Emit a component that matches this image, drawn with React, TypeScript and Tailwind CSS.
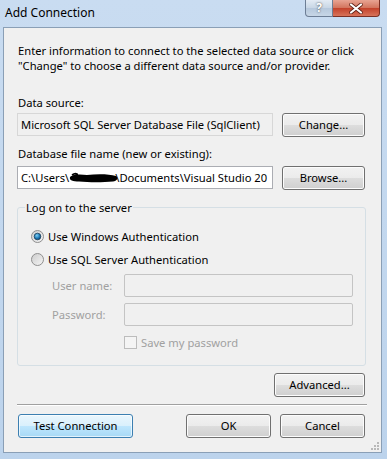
import React from "react";

const font = { fontFamily: '"Noto Sans", "Open Sans", sans-serif' };

function WinButton({ label, width, focused = false }: { label: string; width: string; focused?: boolean }) {
  return (
    <button
      className={`${width} h-[24px] rounded-[3px] border text-[11.2px] text-black leading-none ${
        focused
          ? "border-[#3c7fb1] bg-[linear-gradient(to_bottom,#eaf6fd_0%,#d9f0fc_50%,#bee6fd_51%,#a7d9f5_100%)] shadow-[inset_0_0_0_1px_#ffffffaa]"
          : "border-[#707070] bg-[linear-gradient(to_bottom,#f2f2f2_0%,#ebebeb_50%,#dddddd_51%,#cfcfcf_100%)] shadow-[inset_0_0_0_1px_#fcfcfc]"
      }`}
    >
      {label}
    </button>
  );
}

function Radio({ checked }: { checked: boolean }) {
  return (
    <svg width="13" height="13" viewBox="0 0 13 13" className="shrink-0">
      <defs>
        <linearGradient id={checked ? "rg1" : "rg0"} x1="0" y1="0" x2="1" y2="1">
          <stop offset="0" stopColor="#cbcbcb" />
          <stop offset="1" stopColor="#f6f6f6" />
        </linearGradient>
        <radialGradient id="dot" cx="0.4" cy="0.35" r="0.7">
          <stop offset="0" stopColor="#7fd0f4" />
          <stop offset="0.6" stopColor="#1c78b5" />
          <stop offset="1" stopColor="#0d3f66" />
        </radialGradient>
      </defs>
      <circle cx="6.5" cy="6.5" r="6" fill={`url(#${checked ? "rg1" : "rg0"})`} stroke="#8f8f8f" strokeWidth="1" />
      {checked && <circle cx="6.5" cy="6.5" r="3.3" fill="url(#dot)" stroke="#1b3f5c" strokeWidth="0.8" />}
    </svg>
  );
}

export default function App() {
  return (
    <div style={font} className="w-[387px] h-[459px] flex flex-col bg-[linear-gradient(to_bottom,#c9dcf1,#bcd3ec)] overflow-hidden">
      {/* title bar */}
      <div className="h-[27px] flex items-start shrink-0">
        <div className="pl-[5px] pt-[5px] text-[12px] leading-[16px] text-black">Add Connection</div>
        <div className="ml-auto mr-[7px] flex">
          <div className="w-[28px] h-[17px] rounded-bl-[4px] border border-t-0 border-[#6d7e95] bg-[linear-gradient(to_bottom,#e3ebf4,#c8d6e5_50%,#b6c8dc_51%,#c7d6e6)] flex items-center justify-center text-[12px] font-bold text-white [text-shadow:0_0_2px_#333]">
            ?
          </div>
          <div className="w-[47px] h-[17px] rounded-br-[4px] border border-l-0 border-t-0 border-[#7a2f24] bg-[linear-gradient(to_bottom,#e8a493,#d2735c_50%,#c3412a_51%,#d7735a)] flex items-center justify-center">
            <svg width="14" height="11" viewBox="0 0 14 11">
              <path d="M2 1.5 L12 9.5 M12 1.5 L2 9.5" stroke="#5b1e14" strokeWidth="3.6" strokeLinecap="round" />
              <path d="M2 1.5 L12 9.5 M12 1.5 L2 9.5" stroke="#ffffff" strokeWidth="2.2" strokeLinecap="round" />
            </svg>
          </div>
        </div>
      </div>

      {/* client area */}
      <div className="ml-[3px] w-[379px] h-[426px] border border-[#8a9fb6] bg-[#f0f0f0] text-[11.2px] leading-[15px] text-black flex flex-col px-[13px]">
        <p className="mt-[15px] pl-[1px] whitespace-nowrap">
          Enter information to connect to the selected data source or click
          <br />
          "Change" to choose a different data source and/or provider.
        </p>

        <div className="mt-[22px] pl-[1px]">Data source:</div>
        <div className="mt-[3px] flex items-start">
          <div className="w-[256px] h-[23px] border border-[#d7d7d7] bg-[#f0f0f0] px-[3px] flex items-center whitespace-nowrap overflow-hidden">
            Microsoft SQL Server Database File (SqlClient)
          </div>
          <div className="ml-[9px]">
            <WinButton label="Change..." width="w-[83px]" />
          </div>
        </div>

        <div className="mt-[9px] pl-[1px]">Database file name (new or existing):</div>
        <div className="mt-[5px] flex items-start">
          <div className="w-[256px] h-[23px] border border-[#abadb3] bg-white px-[3px] flex items-center overflow-hidden whitespace-nowrap">
            C:\Users\
            <svg width="52" height="13" viewBox="0 0 52 13" className="-ml-[2px] -mr-[4px] shrink-0">
              <path d="M3 6 C5 3 14 3 20 4 C30 3 42 3 49 5 C52 7 50 10 46 10.5 C36 11.5 22 11.5 12 10.5 C6 10.5 2 9.5 3 6 Z" fill="#000" />
              <path d="M5 4 C9 1 13 4 8 4.5" stroke="#000" strokeWidth="1.6" fill="none" />
            </svg>
            \Documents\Visual Studio 20
          </div>
          <div className="ml-[9px]">
            <WinButton label="Browse..." width="w-[83px]" />
          </div>
        </div>

        <fieldset className="mt-[10px] w-[349px] h-[166px] border border-[#d5dfe5] rounded-[3px]">
          <legend className="ml-[7px] px-[1px] leading-[15px]">Log on to the server</legend>
          <div className="pl-[13px]">
            <div className="mt-[14px] flex items-center gap-[4px]">
              <Radio checked />
              <span>Use Windows Authentication</span>
            </div>
            <div className="mt-[8px] flex items-center gap-[4px]">
              <Radio checked={false} />
              <span>Use SQL Server Authentication</span>
            </div>
            <div className="mt-[7px] flex items-center">
              <span className="w-[93px] pl-[21px] text-[#a0a0a0]">User name:</span>
              <div className="w-[229px] h-[23px] border border-[#c4c4c4] bg-[#f0f0f0] rounded-[2px]" />
            </div>
            <div className="mt-[6px] flex items-center">
              <span className="w-[93px] pl-[21px] text-[#a0a0a0]">Password:</span>
              <div className="w-[229px] h-[23px] border border-[#c4c4c4] bg-[#f0f0f0] rounded-[2px]" />
            </div>
            <div className="mt-[9px] ml-[93px] flex items-center gap-[4px]">
              <div className="w-[13px] h-[13px] border border-[#bcbcbc] bg-[#f4f4f4]" />
              <span className="text-[#a0a0a0]">Save my password</span>
            </div>
          </div>
        </fieldset>

        <div className="mt-[7px] flex justify-end pr-[3px]">
          <WinButton label="Advanced..." width="w-[91px]" />
        </div>

        <div className="mt-[7px] w-[350px] border-t border-[#a0a0a0] border-b-white border-b h-[2px]" />

        <div className="mt-[8px] flex items-start">
          <div className="ml-[1px]">
            <WinButton label="Test Connection" width="w-[115px]" focused />
          </div>
          <div className="ml-[53px]">
            <WinButton label="OK" width="w-[85px]" />
          </div>
          <div className="ml-[9px]">
            <WinButton label="Cancel" width="w-[85px]" />
          </div>
        </div>

        <div className="mt-auto mb-[2px] -mr-[11px] self-end">
          <svg width="8" height="8" viewBox="0 0 8 8">
            {[
              [6, 0],
              [6, 3],
              [3, 3],
              [6, 6],
              [3, 6],
              [0, 6],
            ].map(([x, y], i) => (
              <rect key={i} x={x} y={y} width="2" height="2" fill="#b8b8b8" />
            ))}
          </svg>
        </div>
      </div>
    </div>
  );
}
